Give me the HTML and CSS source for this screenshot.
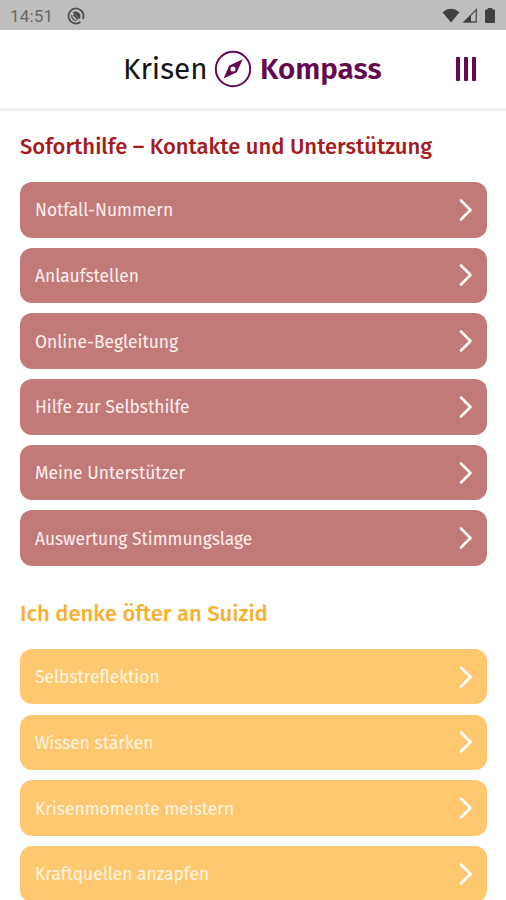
FILE: index.html
```html
<!DOCTYPE html>
<html lang="de">
<head>
    <meta charset="UTF-8">
    <meta name="viewport" content="width=device-width, initial-scale=1.0">
    <title>Krisen Kompass</title>
    <link rel="stylesheet" href="styles.css">
</head>
<body>
    <div class="status-bar">
        <span class="time">14:51</span>
        <svg class="status-app" width="18" height="18" viewBox="0 0 18 18">
            <path d="M13.5 15A7.5 7.5 0 1 1 15.8 12.2" fill="none" stroke="#4a4a4a" stroke-width="1.7"/>
            <path d="M9.500 13.300A4.400 4.400 0 0 1 4.800 8" fill="none" stroke="#4a4a4a" stroke-width="1.3"/>
            <path d="M5.500 5.500Q10.500 3 13.300 7.500Q14 10.500 12.300 12.500Q10 8 5.500 5.500Z" fill="#4a4a4a"/>
            <path d="M6.500 7.500L11 12" stroke="#4a4a4a" stroke-width="1.8"/>
        </svg>
        <svg class="status-icons" width="56" height="18" viewBox="0 0 56 18">
            <path d="M.5 5.2Q9 -1.5 17.5 5.2L9 15.5Z" fill="#404040"/>
            <path d="M34.3 2.5V15H22Z" fill="none" stroke="#505050" stroke-width="1.3"/>
            <path d="M29 8V15H22Z" fill="#404040"/>
            <path d="M46 1.5H50V3H52.5V15.5H43.5V3H46Z" fill="#404040" stroke="#404040" stroke-linejoin="round"/>
        </svg>
    </div>

    <header class="header">
        <div class="logo">
            <span class="logo-krisen">Krisen</span>
            <svg class="logo-compass" width="38" height="38" viewBox="0 0 38 38">
                <circle cx="19" cy="19" r="17.2" fill="none" stroke="#640a50" stroke-width="2"/>
                <path fill="#640a50" fill-rule="evenodd" d="M28.8 9.2L22.8 22.2L9.5 28.5L15.3 15.6ZM19 16.5A2.5 2.5 0 1 0 19 21.5A2.5 2.5 0 1 0 19 16.5Z"/>
            </svg>
            <span class="logo-kompass">Kompass</span>
        </div>
        <div class="menu">
            <span></span>
            <span></span>
            <span></span>
        </div>
    </header>

    <main class="content">
        <section class="group group-red">
            <h2>Soforthilfe – Kontakte und Unterstützung</h2>
            <div class="list">
                <a class="item"><span>Notfall-Nummern</span><svg class="arrow" viewBox="0 0 14 24"><path d="M2 2.5L11.5 12L2 21.5"/></svg></a>
                <a class="item"><span>Anlaufstellen</span><svg class="arrow" viewBox="0 0 14 24"><path d="M2 2.5L11.5 12L2 21.5"/></svg></a>
                <a class="item"><span>Online-Begleitung</span><svg class="arrow" viewBox="0 0 14 24"><path d="M2 2.5L11.5 12L2 21.5"/></svg></a>
                <a class="item"><span>Hilfe zur Selbsthilfe</span><svg class="arrow" viewBox="0 0 14 24"><path d="M2 2.5L11.5 12L2 21.5"/></svg></a>
                <a class="item"><span>Meine Unterstützer</span><svg class="arrow" viewBox="0 0 14 24"><path d="M2 2.5L11.5 12L2 21.5"/></svg></a>
                <a class="item"><span>Auswertung Stimmungslage</span><svg class="arrow" viewBox="0 0 14 24"><path d="M2 2.5L11.5 12L2 21.5"/></svg></a>
            </div>
        </section>

        <section class="group group-yellow">
            <h2>Ich denke öfter an Suizid</h2>
            <div class="list">
                <a class="item"><span>Selbstreflektion</span><svg class="arrow" viewBox="0 0 14 24"><path d="M2 2.5L11.5 12L2 21.5"/></svg></a>
                <a class="item"><span>Wissen stärken</span><svg class="arrow" viewBox="0 0 14 24"><path d="M2 2.5L11.5 12L2 21.5"/></svg></a>
                <a class="item"><span>Krisenmomente meistern</span><svg class="arrow" viewBox="0 0 14 24"><path d="M2 2.5L11.5 12L2 21.5"/></svg></a>
                <a class="item"><span>Kraftquellen anzapfen</span><svg class="arrow" viewBox="0 0 14 24"><path d="M2 2.5L11.5 12L2 21.5"/></svg></a>
            </div>
        </section>
    </main>
</body>
</html>
```
FILE: styles.css
```css
* {
    box-sizing: border-box;
}
body {
    margin: 0;
    height: 900px;
    overflow: hidden;
    background: #fff;
    font-family: "Fira Sans", "Noto Sans", sans-serif;
}
.status-bar {
    display: flex;
    align-items: center;
    height: 30px;
    padding: 1px 8px 0 10px;
    background: #bebebe;
}
.time {
    width: 57px;
    font-family: Roboto, sans-serif;
    font-size: 17px;
    letter-spacing: 0.2px;
    color: #686868;
}
.status-icons {
    margin-left: auto;
}
.header {
    display: flex;
    align-items: center;
    justify-content: space-between;
    height: 81px;
    padding: 0 30px 1px 123px;
    border-bottom: 3px solid #f0f0f0;
}
.logo {
    display: flex;
    align-items: center;
    font-size: 29.6px;
    line-height: 38px;
    white-space: nowrap;
}
.logo-krisen {
    width: 91px;
    padding-top: 1px;
    color: #151515;
}
.logo-kompass {
    margin-left: 8px;
    padding-top: 1px;
    font-weight: 600;
    color: #640a50;
}
.menu {
    display: flex;
    gap: 4px;
}
.menu span {
    width: 4px;
    height: 24px;
    border-radius: 1px;
    background: #640a50;
}
.content {
    padding: 20px 19px 0 20px;
}
.group h2 {
    margin: 0 0 19px;
    font-size: 22px;
    font-weight: 500;
    line-height: 32px;
    white-space: nowrap;
}
.group-yellow {
    margin-top: 32px;
}
.list {
    display: flex;
    flex-direction: column;
    gap: 10.2px;
}
.item {
    display: flex;
    align-items: center;
    justify-content: space-between;
    height: 55.5px;
    padding: 0 14px 0 15px;
    border-radius: 12px;
    font-size: 17.4px;
    color: #fdf0ee;
}
.item span {
    padding-top: 2px;
}
.arrow {
    width: 14px;
    height: 24px;
    fill: none;
    stroke: #fff;
    stroke-width: 2.5;
    stroke-linecap: round;
    stroke-linejoin: round;
}
.group-red h2 {
    color: #a51c20;
}
.group-red .item {
    background: #c27a79;
}
.group-yellow h2 {
    color: #f9b02f;
}
.group-yellow .item {
    background: #ffc86f;
    color: #fff5e3;
}
```
